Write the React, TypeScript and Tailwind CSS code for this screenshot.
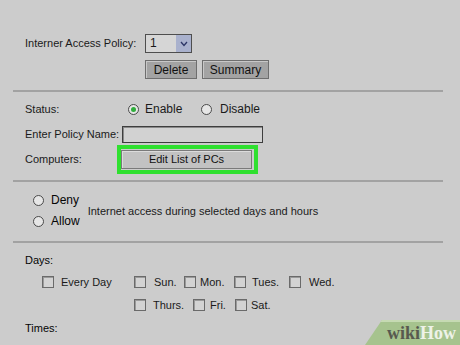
import React from "react";

function Radio({ checked = false }: { checked?: boolean }) {
  return (
    <span className="flex h-[11px] w-[11px] shrink-0 items-center justify-center rounded-full border border-[#4a4a4a] bg-[#e6e6e6]">
      {checked ? <span className="h-[5px] w-[5px] rounded-full bg-[#2fae3c]" /> : null}
    </span>
  );
}

function Check() {
  return <span className="h-[12px] w-[12px] shrink-0 border border-[#6a6a6a] bg-[#d3d3d3] shadow-[inset_1px_1px_0_#9a9a9a]" />;
}

interface Day {
  label: string;
  width: string;
  gap: string;
}

function DayItem({ label, width, gap }: Day) {
  return (
    <div className={`flex items-center ${width}`}>
      <Check />
      <span className={gap}>{label}</span>
    </div>
  );
}

function GrayButton({ children, className }: { children: React.ReactNode; className: string }) {
  return (
    <button
      className={`flex h-[19px] items-center justify-center border border-[#6e6e6e] bg-[#a3a3a3] text-[12px] text-[#111] shadow-[inset_1px_1px_0_#c8c8c8] ${className}`}
    >
      {children}
    </button>
  );
}

function Rule() {
  return <div className="mx-[13px] h-[2px] w-[430px] bg-[#a2a2a2]" />;
}

export default function App() {
  return (
    <div
      className="relative h-[345px] w-[460px] overflow-hidden bg-[#cccccc] text-[11px] text-[#1a1a1a]"
      style={{ fontFamily: '"Liberation Sans", Arial, sans-serif' }}
    >
      {/* policy selector */}
      <section className="h-[90px] pl-[25px] pt-[34px]">
        <div className="flex h-[19px] items-center">
          <span className="w-[120px]">Interner Access Policy:</span>
          <div className="flex h-[19px] w-[47px] border border-[#4e4e4e] bg-[#d6d6d6]">
            <span className="flex-1 pl-[4px] text-[12px] leading-[17px]">1</span>
            <span className="flex w-[15px] items-center justify-center bg-[#a9b1cd]">
              <svg width="8" height="6" viewBox="0 0 8 6">
                <path d="M1 1l3 3.5L7 1" fill="none" stroke="#2c3566" strokeWidth="1.3" />
              </svg>
            </span>
          </div>
        </div>
        <div className="mt-[7px] flex gap-[5px] pl-[120px]">
          <GrayButton className="w-[52px]">Delete</GrayButton>
          <GrayButton className="w-[67px]">Summary</GrayButton>
        </div>
      </section>
      <Rule />

      {/* status / name / computers */}
      <section className="h-[88px] pl-[25px] pt-[9px]">
        <div className="flex h-[16px] items-center">
          <span className="w-[103px]">Status:</span>
          <Radio checked />
          <span className="ml-[6px] w-[56px] text-[12px]">Enable</span>
          <Radio />
          <span className="ml-[8px] text-[12px]">Disable</span>
        </div>
        <div className="mt-[9px] flex h-[17px] items-center">
          <span className="w-[97px]">Enter Policy Name:</span>
          <span className="h-[17px] w-[141px] border border-[#3e3e3e] bg-[#d2d2d2] shadow-[inset_1px_1px_0_#8a8a8a]" />
        </div>
        <div className="mt-[2px] flex items-center">
          <span className="w-[92px]">Computers:</span>
          <div className="flex h-[29px] w-[141px] items-center border-[4px] border-[#2fe02f] pr-[2px]">
            <button className="flex h-[19px] w-full items-center justify-center border border-[#7a7a7a] bg-[#c2c2c2] text-[11px] text-[#111] shadow-[inset_1px_1px_0_#dcdcdc]">
              Edit List of PCs
            </button>
          </div>
        </div>
      </section>
      <Rule />

      {/* deny / allow */}
      <section className="flex h-[59px] items-center pl-[33px] pb-[2px]">
        <div className="flex flex-col gap-[5px]">
          <div className="flex h-[16px] items-center">
            <Radio />
            <span className="ml-[7px] text-[12px] text-[#050505]">Deny</span>
          </div>
          <div className="flex h-[16px] items-center">
            <Radio />
            <span className="ml-[7px] text-[12px] text-[#050505]">Allow</span>
          </div>
        </div>
        <span className="ml-[8px] mt-[1px]">Internet access during selected days and hours</span>
      </section>
      <Rule />

      {/* days / times */}
      <section className="pl-[25px] pt-[9px]">
        <div className="flex h-[16px] items-center text-[#050505]">Days:</div>
        <div className="mt-[6px] flex h-[16px] items-center pl-[17px]">
          <DayItem label="Every Day" width="w-[92px]" gap="ml-[7px]" />
          <DayItem label="Sun." width="w-[50px]" gap="ml-[8px]" />
          <DayItem label="Mon." width="w-[50px]" gap="ml-[4px]" />
          <DayItem label="Tues." width="w-[55px]" gap="ml-[6px]" />
          <DayItem label="Wed." width="w-[60px]" gap="ml-[8px]" />
        </div>
        <div className="mt-[7px] flex h-[16px] items-center pl-[109px]">
          <DayItem label="Thurs." width="w-[59px]" gap="ml-[7px]" />
          <DayItem label="Fri." width="w-[42px]" gap="ml-[5px]" />
          <DayItem label="Sat." width="w-[50px]" gap="ml-[4px]" />
        </div>
        <div className="mt-[7px] flex h-[16px] items-center text-[#050505]">Times:</div>
      </section>

      {/* watermark */}
      <div className="absolute bottom-0 right-0 h-[25px] w-[95px]">
        <svg className="absolute inset-0" width="95" height="25" viewBox="0 0 95 25">
          <polygon points="17,0 95,0 95,25 0,25" fill="#a6c38e" />
          <polygon points="17,0 95,0 95,2 15,2" fill="#c6dab3" />
        </svg>
        <span
          className="absolute right-[4px] top-[4px] text-[18px] font-bold leading-[18px]"
          style={{ fontFamily: '"Liberation Serif", "DejaVu Serif", serif' }}
        >
          <span className="text-[#58594f]">wiki</span>
          <span className="text-[#eef2e8]">How</span>
        </span>
      </div>
    </div>
  );
}
